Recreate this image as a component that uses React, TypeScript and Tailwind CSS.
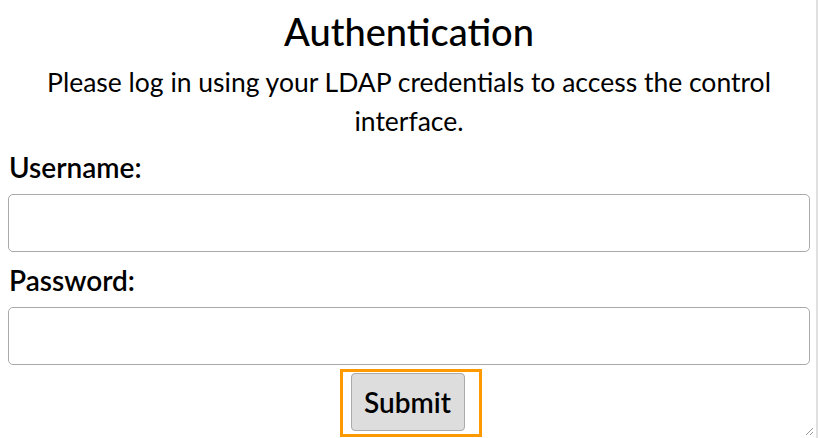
import React from "react";

export default function App() {
  return (
    <div className="relative h-[438px] w-[818px] overflow-hidden border-r-2 border-[#e0e0e0] bg-white text-black [font-family:Lato,'Noto_Sans',sans-serif]">
      <div className="flex flex-col pt-[7px] pr-[6px] pl-2">
        <h1 className="text-center text-[38px] leading-[48px] font-medium">Authentication</h1>
        <p className="mx-auto mt-[8px] w-[780px] text-center text-[26.5px] leading-[39px]">
          Please log in using your LDAP credentials to access the control interface.
        </p>
        <label className="mt-[10px] pl-[1px] text-[28px] leading-[32px] font-semibold">Username:</label>
        <input
          type="text"
          className="mt-[11px] h-[58px] w-full rounded-[5px] border border-[#aaaaaa] bg-white px-2 text-[22px]"
        />
        <label className="mt-[12px] pl-[1px] text-[28px] leading-[32px] font-semibold">Password:</label>
        <input
          type="password"
          className="mt-[11px] h-[58px] w-full rounded-[5px] border border-[#aaaaaa] bg-white px-2 text-[22px]"
        />
        <div className="mt-[4px] flex justify-center">
          <div className="ml-[3px] border-[3px] border-[#ff9900] pt-[1px] pr-[14px] pb-[3px] pl-[8px]">
            <button
              type="submit"
              className="h-[58px] w-[114px] rounded-[4px] border border-[#aaaaaa] bg-[#dddddd] text-[28px] font-semibold"
            >
              Submit
            </button>
          </div>
        </div>
      </div>
      <svg className="absolute right-[2px] bottom-[2px]" width="10" height="10" viewBox="0 0 10 10">
        <path d="M9 2 L2 9 M9 6 L6 9" stroke="#999" strokeWidth="1" />
      </svg>
    </div>
  );
}
